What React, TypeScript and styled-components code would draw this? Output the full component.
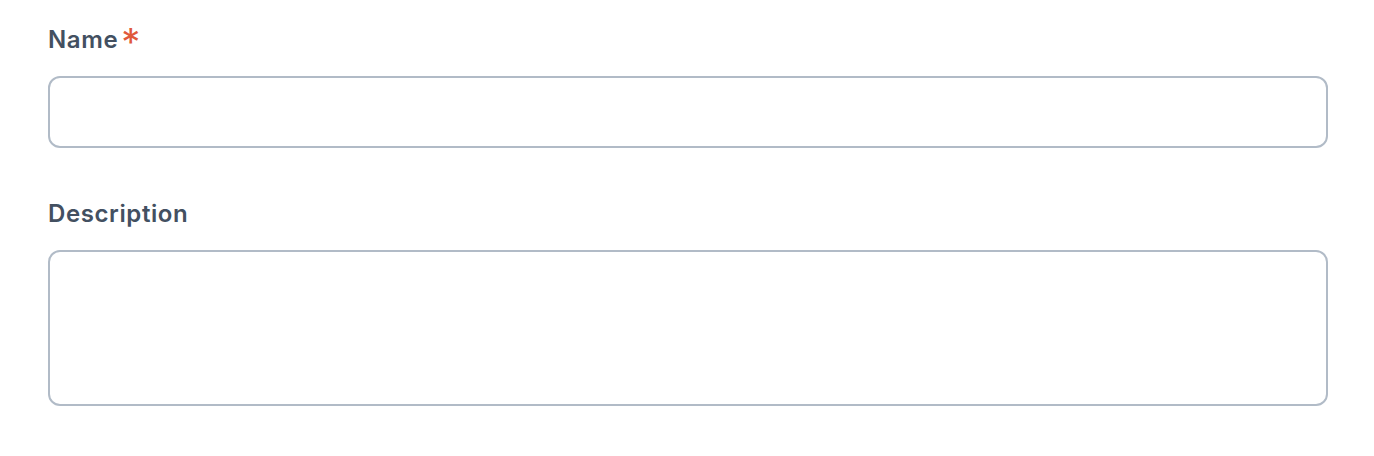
import React, { ReactElement } from 'react';
import styled, { createGlobalStyle } from 'styled-components';

const GlobalStyle = createGlobalStyle`
  * { box-sizing: border-box; }
  body {
    margin: 0;
    background: #ffffff;
    font-family: Inter, "Noto Sans", sans-serif;
  }
`;

const Form = styled.form`
  display: flex;
  flex-direction: column;
  gap: 50px;
  padding: 24px 46px 0 48px;
`;

const Field = styled.div`
  display: flex;
  flex-direction: column;
  gap: 20px;
`;

const Label = styled.label`
  display: flex;
  align-items: flex-start;
  height: 32px;
  font-size: 24px;
  line-height: 32px;
  font-weight: 600;
  letter-spacing: 0.6px;
  color: #435061;
`;

const Required = styled.span`
  color: #e0593b;
  margin-left: 3px;
  font-size: 38px;
  font-weight: 400;
  line-height: 28px;
  margin-top: 4px;
`;

const TextInput = styled.input`
  height: 72px;
  width: 100%;
  border: 2px solid #b1bbc7;
  border-radius: 12px;
  background: #fff;
  font: inherit;
  font-size: 24px;
  padding: 0 20px;
  outline: none;
`;

const TextArea = styled.textarea`
  height: 156px;
  width: 100%;
  border: 2px solid #b1bbc7;
  border-radius: 12px;
  background: #fff;
  font: inherit;
  font-size: 24px;
  padding: 16px 20px;
  resize: none;
  outline: none;
`;

const App = (): ReactElement => (
  <>
    <GlobalStyle />
    <Form>
      <Field>
        <Label htmlFor="name">
          Name<Required>*</Required>
        </Label>
        <TextInput id="name" type="text" />
      </Field>
      <Field>
        <Label htmlFor="description">Description</Label>
        <TextArea id="description" />
      </Field>
    </Form>
  </>
);

export default App;
